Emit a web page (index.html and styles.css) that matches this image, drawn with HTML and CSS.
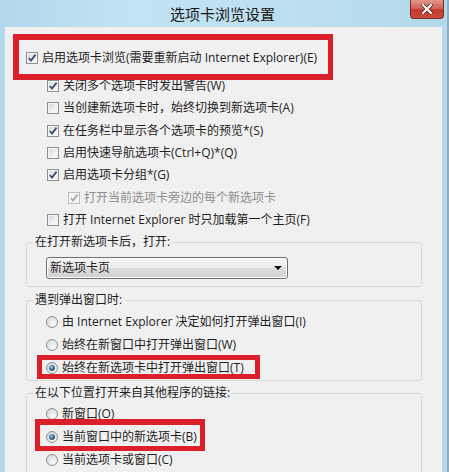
FILE: index.html
```html
<!DOCTYPE html>
<html lang="zh-CN">
<head>
<meta charset="utf-8">
<title>选项卡浏览设置</title>
<link rel="stylesheet" href="styles.css">
</head>
<body>
<div class="window">
  <div class="titlebar">
    <span></span>
    <span class="title">选项卡浏览设置</span>
    <span class="close"><svg viewBox="0 0 12 10" width="12" height="10"><path d="M2 1 L10 9 M10 1 L2 9" stroke="#5a1410" stroke-width="3.6" stroke-linecap="square"/><path d="M2 1 L10 9 M10 1 L2 9" stroke="#fff" stroke-width="2.2" stroke-linecap="square"/></svg></span>
  </div>
  <div class="client">
    <div class="row lvl0"><span class="cb"><svg viewBox="0 0 10 10"><path d="M1.8 5 L4 7.6 L8.6 1.6"/></svg></span><span>启用选项卡浏览(需要重新启动 Internet Explorer)(E)</span></div>
    <div class="rows">
      <div class="row lvl1"><span class="cb"><svg viewBox="0 0 10 10"><path d="M1.8 5 L4 7.6 L8.6 1.6"/></svg></span><span>关闭多个选项卡时发出警告(W)</span></div>
      <div class="row lvl1"><span class="cb"></span><span>当创建新选项卡时，始终切换到新选项卡(A)</span></div>
      <div class="row lvl1"><span class="cb"><svg viewBox="0 0 10 10"><path d="M1.8 5 L4 7.6 L8.6 1.6"/></svg></span><span>在任务栏中显示各个选项卡的预览*(S)</span></div>
      <div class="row lvl1"><span class="cb"></span><span>启用快速导航选项卡(Ctrl+Q)*(Q)</span></div>
      <div class="row lvl1"><span class="cb"><svg viewBox="0 0 10 10"><path d="M1.8 5 L4 7.6 L8.6 1.6"/></svg></span><span>启用选项卡分组*(G)</span></div>
      <div class="row lvl2 disabled"><span class="cb"><svg viewBox="0 0 10 10"><path d="M1.8 5 L4 7.6 L8.6 1.6"/></svg></span><span>打开当前选项卡旁边的每个新选项卡</span></div>
      <div class="row lvl1"><span class="cb"></span><span>打开 Internet Explorer 时只加载第一个主页(F)</span></div>
    </div>

    <fieldset class="group g1">
      <legend>在打开新选项卡后，打开:</legend>
      <div class="select"><span>新选项卡页</span><span class="arrow"></span></div>
    </fieldset>

    <fieldset class="group g2">
      <legend>遇到弹出窗口时:</legend>
      <div class="row radio"><span class="rb"></span><span>由 Internet Explorer 决定如何打开弹出窗口(I)</span></div>
      <div class="row radio"><span class="rb"></span><span>始终在新窗口中打开弹出窗口(W)</span></div>
      <div class="row radio"><span class="rb on"></span><span>始终在新选项卡中打开弹出窗口(T)</span></div>
    </fieldset>

    <fieldset class="group g3">
      <legend>在以下位置打开来自其他程序的链接:</legend>
      <div class="row radio"><span class="rb"></span><span>新窗口(O)</span></div>
      <div class="row radio"><span class="rb on"></span><span>当前窗口中的新选项卡(B)</span></div>
      <div class="row radio"><span class="rb"></span><span>当前选项卡或窗口(C)</span></div>
    </fieldset>
  </div>

  <div class="mark mark1"></div>
  <div class="mark mark2"></div>
  <div class="mark mark3"></div>
</div>
</body>
</html>
```

FILE: styles.css
```css
html, body {
  margin: 0;
  padding: 0;
}

body {
  width: 449px;
  height: 472px;
  overflow: hidden;
  background: #b7dcec;
  font-family: "Open Sans", "Noto Sans CJK SC", sans-serif;
  font-size: 12px;
  color: #1e1e1e;
}

.window {
  position: relative;
  width: 449px;
  height: 472px;
  box-sizing: border-box;
  display: flex;
  flex-direction: column;
  background: linear-gradient(90deg, #b0d8ea 0%, #c2e3f1 30%, #bde0ef 60%, #b3d9ea 100%);
  border-right: 2px solid #93aebb;
  overflow: hidden;
}

.titlebar {
  height: 27px;
  flex: none;
  display: grid;
  grid-template-columns: 1fr auto 1fr;
  align-items: start;
}

.title {
  font-family: "Noto Sans CJK SC", sans-serif;
  font-size: 15px;
  line-height: 27px;
  color: #1a1a1a;
  margin-left: -2px;
}

.close {
  justify-self: end;
  margin-right: 3px;
  width: 34px;
  height: 19px;
  box-sizing: border-box;
  border: 1px solid #7d2a22;
  border-top: none;
  border-radius: 0 0 4px 4px;
  background: linear-gradient(#e3958c 0%, #d2665b 45%, #c2392c 55%, #c94c3d 100%);
  display: flex;
  align-items: center;
  justify-content: center;
}

.client {
  flex: 1;
  margin: 0 5px 0 5px;
  background: #f0f0f0;
  padding-top: 20px;
  display: flex;
  flex-direction: column;
}

.row {
  display: flex;
  align-items: center;
  gap: 4px;
  white-space: nowrap;
  line-height: 16px;
}

.lvl0 {
  height: 22px;
  padding-left: 21px;
}

.rows {
  margin-top: 6px;
  display: flex;
  flex-direction: column;
}

.rows .row {
  height: 22.3px;
}

.lvl1 {
  padding-left: 42px;
}

.lvl2 {
  padding-left: 63px;
}

.cb {
  width: 12px;
  height: 12px;
  flex: none;
  box-sizing: border-box;
  border: 1px solid #8e8f8f;
  background: linear-gradient(135deg, #d3d6da 0%, #eceef0 55%, #fbfbfb 100%);
  box-shadow: inset 0 0 0 1px #f6f6f6;
  display: flex;
  align-items: center;
  justify-content: center;
}

.cb svg {
  width: 10px;
  height: 10px;
  overflow: visible;
}

.cb svg path {
  fill: none;
  stroke: #3b4c72;
  stroke-width: 1.8;
}

.disabled {
  color: #8e8e8e;
}

.disabled .cb {
  border-color: #bdbdbd;
  background: #f4f4f4;
}

.disabled .cb svg path {
  stroke: #a9a9a9;
}

.group {
  margin: 0 20px 0 21px;
  padding: 0;
  border: 1px solid #d7dadc;
  border-radius: 3px;
  min-width: 0;
}

.group legend {
  margin-left: 6px;
  padding: 0 2px;
  line-height: 16px;
  font-size: 12px;
}

.g1 {
  margin-top: 3px;
  padding-bottom: 7px;
}

.g2 {
  margin-top: 5px;
}

.g3 {
  margin-top: 4.5px;
  padding-bottom: 10px;
}

.select {
  margin: 7px 0 0 19px;
  width: 242px;
  height: 22px;
  box-sizing: border-box;
  border: 1px solid #707070;
  border-radius: 3px;
  background: linear-gradient(#f4f4f4 0%, #ebebeb 50%, #dddddd 51%, #d0d0d0 100%);
  box-shadow: inset 0 0 0 1px #fbfbfb;
  display: flex;
  align-items: center;
  justify-content: space-between;
  padding: 0 5px 0 3px;
  line-height: 16px;
}

.arrow {
  width: 0;
  height: 0;
  border-left: 4px solid transparent;
  border-right: 4px solid transparent;
  border-top: 4px solid #111;
}

.radio {
  height: 23px;
  padding-left: 19px;
}

.g2 .radio:first-of-type {
  margin-top: 2.5px;
}

.g3 .radio:first-of-type {
  margin-top: 1.5px;
}

.rb {
  width: 12px;
  height: 12px;
  flex: none;
  box-sizing: border-box;
  border-radius: 50%;
  border: 1px solid #8e8f8f;
  background: radial-gradient(circle at 65% 70%, #fdfdfd 0%, #e6e7e8 50%, #cfd2d5 100%);
  display: flex;
  align-items: center;
  justify-content: center;
}

.rb.on::after {
  content: "";
  width: 6px;
  height: 6px;
  border-radius: 50%;
  background: radial-gradient(circle at 40% 35%, #a7c9e4 0%, #3f6f98 45%, #1d3f61 100%);
}

.mark {
  position: absolute;
  box-sizing: border-box;
  border: 5px solid #db1f2b;
}

.mark1 {
  left: 13px;
  top: 34px;
  width: 320px;
  height: 46px;
  border-width: 6px 5px 6px 6px;
}

.mark2 {
  left: 37px;
  top: 355px;
  width: 223px;
  height: 24px;
}

.mark3 {
  left: 35px;
  top: 419px;
  width: 170px;
  height: 32px;
  border-width: 6px 5px 5px 5px;
}
```
